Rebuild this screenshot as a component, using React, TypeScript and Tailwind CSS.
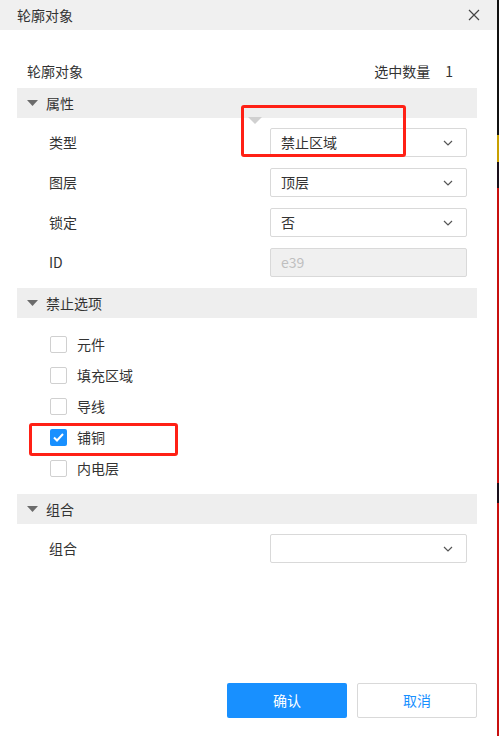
import React from "react";

const font = "font-['Microsoft_YaHei','Noto_Sans_CJK_SC','Noto_Sans',sans-serif]";

const Chevron: React.FC = () => (
  <svg width="10" height="6" viewBox="0 0 10 6" className="text-[#555]">
    <path d="M1 1 L5 5 L9 1" fill="none" stroke="currentColor" strokeWidth="1.2" />
  </svg>
);

const Section: React.FC<{ title: string }> = ({ title }) => (
  <div className="flex items-center h-[30px] bg-[#eeeeee] pl-[10px]">
    <svg width="11" height="6" viewBox="0 0 11 6" className="mr-[8px]">
      <path d="M0 0 L11 0 L5.5 6 Z" fill="#6b6b6b" />
    </svg>
    <span className="text-[14px] text-[#333]">{title}</span>
  </div>
);

const SelectRow: React.FC<{ label: string; value?: string; disabled?: boolean }> = ({
  label,
  value,
  disabled,
}) => (
  <div className="flex items-center h-[29px] pl-[32px] pr-[10px]">
    <span className="flex-1 text-[14px] text-[#333]">{label}</span>
    <div
      className={
        disabled
          ? "flex items-center w-[197px] h-[29px] border border-[#d9d9d9] rounded-[2px] bg-[#f0f0f0] px-[10px] text-[14px] text-[#bfbfbf]"
          : "flex items-center justify-between w-[197px] h-[29px] border border-[#d9d9d9] rounded-[2px] bg-white pl-[10px] pr-[13px] text-[14px] text-[#333]"
      }
    >
      <span>{value}</span>
      {!disabled && <Chevron />}
    </div>
  </div>
);

const Check: React.FC<{ label: string; checked?: boolean }> = ({ label, checked }) => (
  <div className="flex items-center h-[31px] pl-[33px]">
    {checked ? (
      <div className="w-[17px] h-[17px] rounded-[2px] bg-[#1890ff] flex items-center justify-center">
        <svg width="11" height="9" viewBox="0 0 11 9">
          <path d="M1 4.5 L4 7.5 L10 1" fill="none" stroke="white" strokeWidth="2" />
        </svg>
      </div>
    ) : (
      <div className="w-[17px] h-[17px] rounded-[2px] border border-[#d0d0d0] bg-white" />
    )}
    <span className="ml-[10px] text-[14px] text-[#333]">{label}</span>
  </div>
);

const App: React.FC = () => {
  return (
    <div className={`relative flex w-[499px] h-[736px] bg-white overflow-hidden ${font}`}>
      <div className="flex flex-col w-[497px] h-full">
        {/* Header */}
        <div className="flex items-center justify-between h-[30px] bg-[#f0f0f0] pl-[17px] pr-[17px]">
          <span className="text-[14px] text-[#333]">轮廓对象</span>
          <svg width="12" height="12" viewBox="0 0 12 12">
            <path d="M1 1 L11 11 M11 1 L1 11" stroke="#444" strokeWidth="1.2" />
          </svg>
        </div>

        <div className="flex flex-col flex-1 pl-[17px] pr-[20px]">
          {/* Summary */}
          <div className="flex items-center justify-between h-[26px] mt-[28px] mb-[4px] pl-[10px] pr-[24px] text-[14px] text-[#333]">
            <span>轮廓对象</span>
            <span>
              选中数量<span className="ml-[15px]">1</span>
            </span>
          </div>

          <Section title="属性" />
          <div className="flex flex-col gap-[11px] pt-[10px] pb-[11px]">
            <SelectRow label="类型" value="禁止区域" />
            <SelectRow label="图层" value="顶层" />
            <SelectRow label="锁定" value="否" />
            <SelectRow label="ID" value="e39" disabled />
          </div>

          <Section title="禁止选项" />
          <div className="flex flex-col pt-[11px] pb-[10px]">
            <Check label="元件" />
            <Check label="填充区域" />
            <Check label="导线" />
            <Check label="铺铜" checked />
            <Check label="内电层" />
          </div>

          <Section title="组合" />
          <div className="pt-[10px]">
            <SelectRow label="组合" value="" />
          </div>

          <div className="flex-1" />

          {/* Buttons */}
          <div className="flex justify-end gap-[10px] mb-[18px]">
            <button className="w-[120px] h-[35px] rounded-[2px] bg-[#1890ff] text-white text-[14px]">
              确认
            </button>
            <button className="w-[120px] h-[35px] rounded-[2px] border border-[#d9d9d9] bg-white text-[#1890ff] text-[14px]">
              取消
            </button>
          </div>
        </div>
      </div>

      {/* background peeking at right edge */}
      <div className="flex flex-col w-[2px] h-full">
        <div className="h-[135px] bg-[#111]" />
        <div className="h-[27px] bg-[#c8a000]" />
        <div className="h-[26px] bg-[#1a0f1a]" />
        <div className="h-[295px] bg-[#c8100f]" />
        <div className="h-[20px] bg-[#1a0f1a]" />
        <div className="flex-1 bg-[#c8100f]" />
      </div>

      {/* annotation overlays */}
      <div className="absolute left-[248px] top-[117px] w-0 h-0 border-l-[7px] border-r-[7px] border-t-[7px] border-l-transparent border-r-transparent border-t-[#d0d0d0]" />
      <div className="absolute left-[241px] top-[105px] w-[165px] h-[52px] border-[3px] border-[#ff2015] rounded-[3px]" />
      <div className="absolute left-[29px] top-[423px] w-[149px] h-[33px] border-[3px] border-[#ff2015] rounded-[3px]" />
    </div>
  );
};

export default App;
